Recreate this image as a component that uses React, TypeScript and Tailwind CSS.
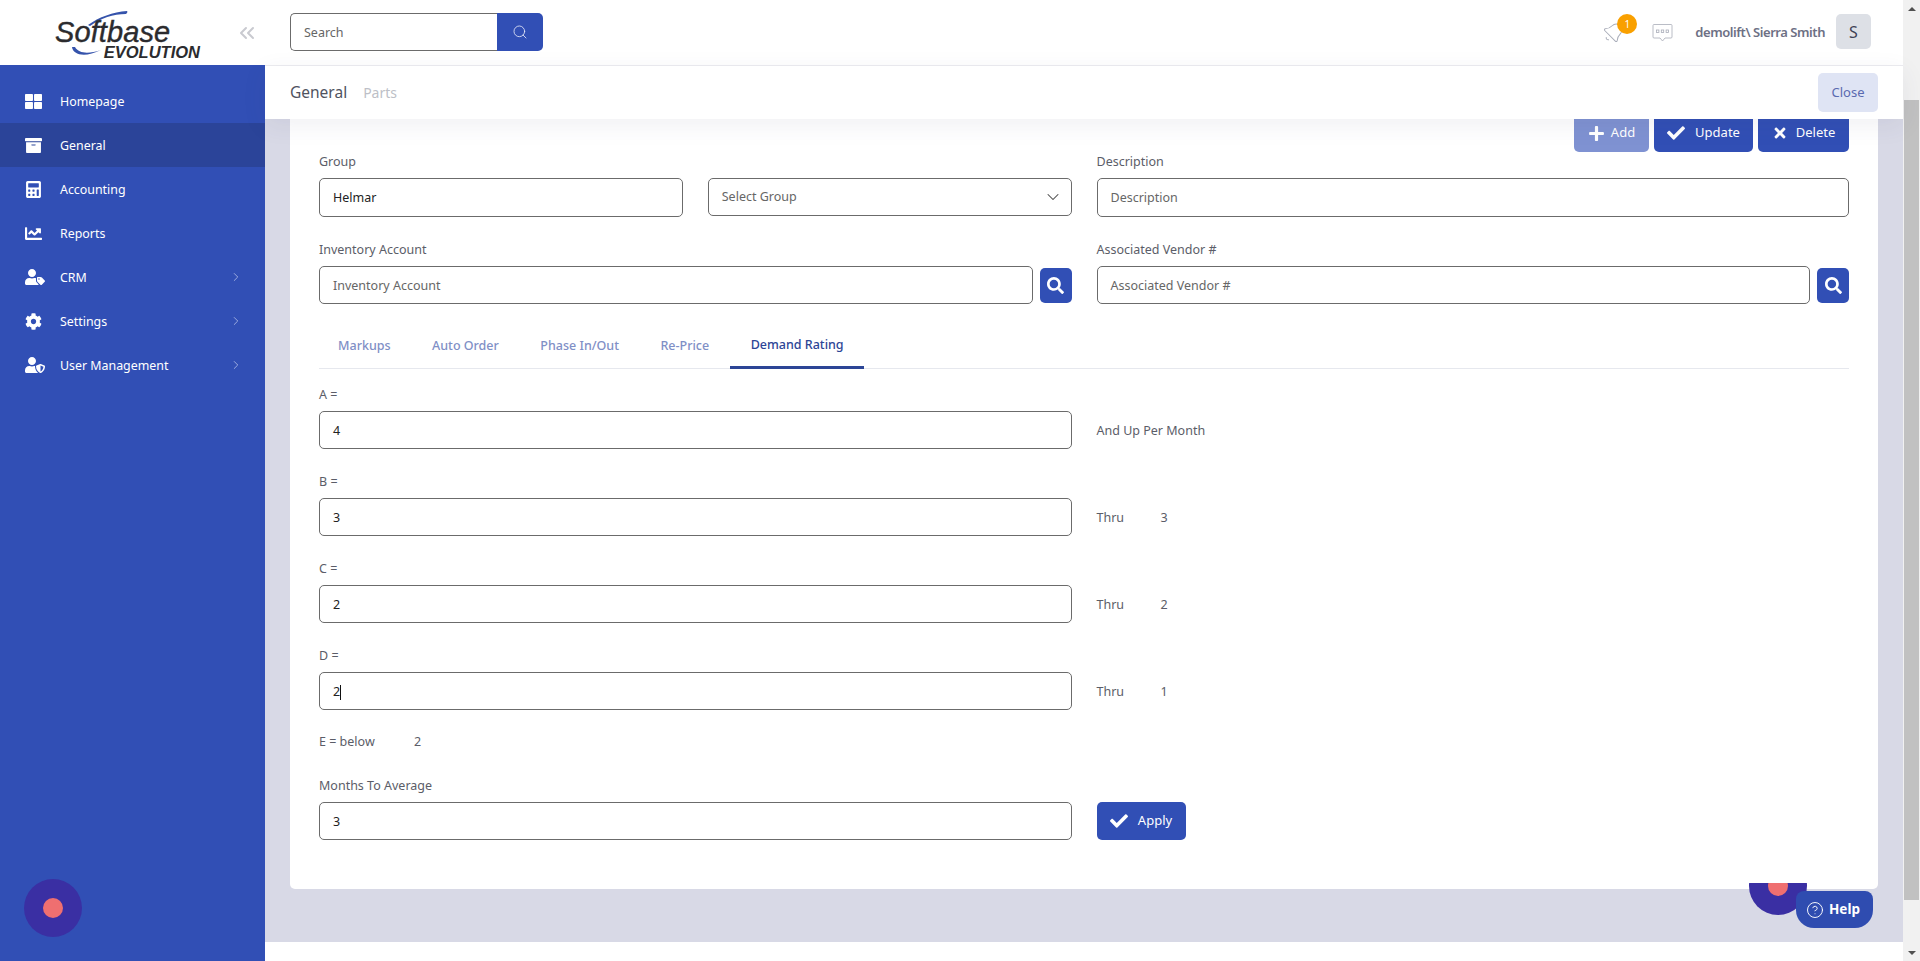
import React from "react";
import { ChevronRight, ChevronsLeft, ChevronDown, Search, Bell, CircleHelp } from "lucide-react";
import {
  FaThLarge,
  FaArchive,
  FaCalculator,
  FaChartLine,
  FaUserTag,
  FaCog,
  FaUserShield,
  FaPlus,
  FaCheck,
  FaTimes,
  FaSearch,
} from "react-icons/fa";

const menu = [
  { label: "Homepage", icon: FaThLarge, size: 17 },
  { label: "General", icon: FaArchive, size: 17 },
  { label: "Accounting", icon: FaCalculator, size: 17 },
  { label: "Reports", icon: FaChartLine, size: 17 },
  { label: "CRM", icon: FaUserTag, size: 20, arrow: true },
  { label: "Settings", icon: FaCog, size: 17, arrow: true },
  { label: "User Management", icon: FaUserShield, size: 20, arrow: true },
];

const tabs = ["Markups", "Auto Order", "Phase In/Out", "Re-Price", "Demand Rating"];

const Logo = () => (
  <div className="relative w-[146px] h-[50px] ml-[55px] shrink-0">
    {/* swoosh lines round the wordmark */}
    <svg className="absolute left-0 top-0 w-[146px] h-[50px]" viewBox="0 0 146 50" fill="none">
      <path d="M33 17 C 44 9, 58 4, 72 3 C 73 4, 72 5, 71 6 C 58 6, 46 10, 35 18 Z" fill="#3553ab" />
      <path d="M17 39 C 18 47, 30 50, 46 42 C 34 46, 24 46, 20 39 Z" fill="#3553ab" />
    </svg>
    <span className="absolute left-0 top-[10px] text-[29px] leading-[29px] tracking-[0.1px] italic text-[#2b2b2e] [-webkit-text-stroke:0.4px_#2b2b2e] font-['Liberation_Sans',sans-serif]">
      Softbase
    </span>
    <span className="absolute right-[1px] top-[36px] text-[16.5px] leading-[16.5px] font-bold italic text-[#2b2b2e] font-['Liberation_Sans',sans-serif]">
      EVOLUTION
    </span>
  </div>
);

const Sidebar = () => (
  <aside className="w-[265px] shrink-0 flex flex-col bg-[#314fb5]">
    <div className="h-[65px] bg-white flex items-center relative">
      <Logo />
      <ChevronsLeft className="ml-auto mr-[6px] text-[#c9cad0]" size={24} strokeWidth={2} />
    </div>
    <nav className="pt-[14px] flex-1">
      {menu.map((m) => (
        <div
          key={m.label}
          className={`h-[44px] flex items-center pl-[25px] pr-[22px] text-white text-[12.4px] ${m.label === "General" ? "bg-[#2b4499]" : ""}`}
        >
          <span className="w-[35px] flex items-center">
            <m.icon size={m.size} />
          </span>
          <span className="pt-[2px]">{m.label}</span>
          {m.arrow && <ChevronRight className="ml-auto text-[#a9b6e4]" size={14} strokeWidth={1.5} />}
        </div>
      ))}
    </nav>
    <div className="pl-[24px] pb-[24px]">
      <div className="w-[58px] h-[58px] rounded-full bg-[#3a2fa3] flex items-center justify-center">
        <div className="w-[20px] h-[20px] rounded-full bg-[#ef6f70]" />
      </div>
    </div>
  </aside>
);

const Topbar = () => (
  <header className="h-[66px] shrink-0 bg-white border-b border-[#ececf0] flex items-center pl-[25px] pr-[32px]">
    <div className="flex h-[38px] w-[253px] mb-[2px]">
      <div className="flex-1 border border-[#6b6b6b] border-r-0 rounded-l-[5px] flex items-center pl-[13px] pt-[3px] text-[12.5px] text-[#666]">
        Search
      </div>
      <div className="w-[46px] bg-[#314fb5] rounded-r-[5px] flex items-center justify-center pr-[1px]">
        <Search className="text-[#e4e8f8]" size={16} strokeWidth={1.25} />
      </div>
    </div>
    <div className="ml-auto flex items-center mb-[2px]">
      <div className="relative mr-[27px] pt-[2px]">
        <Bell className="text-[#a8acb8] rotate-45" size={23} strokeWidth={1} />
        <span className="absolute -right-[12px] -top-[5px] w-[20px] h-[20px] rounded-full bg-[#f9a000] text-white text-[10px] flex items-center justify-center">
          1
        </span>
      </div>
      <svg className="w-[21px] h-[20px] text-[#a8acb8] mr-[22px] mt-[2px]" viewBox="0 0 21 20" fill="none" stroke="currentColor" strokeWidth="0.8">
        <path d="M2 1.5 H19 Q20 1.5 20 2.5 V14 Q20 15 19 15 H13 L10.5 18 L8 15 H2 Q1 15 1 14 V2.5 Q1 1.5 2 1.5 Z" />
        <rect x="4.5" y="7" width="2.4" height="2.4" />
        <rect x="9.3" y="7" width="2.4" height="2.4" />
        <rect x="14.1" y="7" width="2.4" height="2.4" />
      </svg>
      <span className="text-[13px] font-semibold text-[#6d7084] tracking-[-0.45px] mr-[11px] pt-[2px]">demolift\ Sierra Smith</span>
      <div className="w-[35px] h-[35px] rounded-[5px] bg-[#dde0e6] flex items-center justify-center text-[16px] text-[#3f4254]">
        S
      </div>
    </div>
  </header>
);

const Subheader = () => (
  <div className="h-[53px] shrink-0 bg-white flex items-center pl-[25px] pr-[25px] relative z-10 shadow-[0_6px_24px_rgba(60,60,100,0.08)]">
    <span className="text-[15.5px] text-[#50535f]">General</span>
    <span className="ml-[16px] text-[14px] text-[#bdbfc7]">Parts</span>
    <div className="ml-auto w-[60px] h-[39px] rounded-[5px] bg-[#dfe4f4] flex items-center justify-center text-[13px] text-[#5a6ab0]">
      Close
    </div>
  </div>
);

const Field = ({ value, placeholder, className = "h-[38px]", caret }: { value?: string; placeholder?: string; className?: string; caret?: boolean }) => (
  <div className={`border border-[#6b6b6b] rounded-[5px] flex items-center pl-[13px] pt-[2px] text-[12.5px] bg-white ${value ? "text-[#222]" : "text-[#666]"} ${className}`}>
    {value ?? placeholder}
    {caret && <span className="w-px h-[15px] bg-[#111]" />}
  </div>
);

const Label = ({ children }: { children: React.ReactNode }) => (
  <div className="h-[18px] leading-[20px] mb-[8px] text-[12.5px] text-[#5b5d68]">{children}</div>
);

const IconBtn = () => (
  <div className="w-[32px] h-[35px] rounded-[5px] bg-[#314fb5] flex items-center justify-center text-white shrink-0">
    <FaSearch size={17} />
  </div>
);

const Thru = ({ n }: { n: string }) => (
  <div className="flex items-center pt-[2px] text-[12.5px] text-[#5b5d68]">
    <span className="w-[64px]">Thru</span>
    <span>{n}</span>
  </div>
);

const RatingRow = ({ label, value, caret, children }: { label: string; value: string; caret?: boolean; children: React.ReactNode }) => (
  <div className="mb-[23px]">
    <Label>{label}</Label>
    <div className="grid grid-cols-2 gap-x-[25px] items-center">
      <Field value={value} caret={caret} />
      {children}
    </div>
  </div>
);

const Card = () => (
  <section className="bg-white rounded-b-[5px] px-[29px] pb-[49px]">
    <div className="flex justify-end gap-[5px] h-[33px] text-[13px] text-white">
      <div className="w-[75px] pb-[5px] bg-[#7f92d2] rounded-b-[5px] flex items-center justify-center gap-[6px]">
        <FaPlus size={17} />
        Add
      </div>
      <div className="w-[99px] pb-[5px] bg-[#314fb5] rounded-b-[5px] flex items-center justify-center gap-[10px]">
        <FaCheck size={18} />
        Update
      </div>
      <div className="w-[91px] pb-[5px] bg-[#314fb5] rounded-b-[5px] flex items-center justify-center gap-[8px]">
        <FaTimes size={16} />
        Delete
      </div>
    </div>

    <div className="grid grid-cols-2 gap-x-[25px]">
      <div className="grid grid-cols-2 gap-x-[25px]">
        <div>
          <Label>Group</Label>
          <Field value="Helmar" className="h-[39px]" />
        </div>
        <div className="pt-[26px]">
          <div className="h-[38px] border border-[#6b6b6b] rounded-[5px] flex items-center justify-between pl-[13px] pr-[8px] text-[12.5px] text-[#666]">
            Select Group
            <ChevronDown className="text-[#444]" size={20} strokeWidth={1.25} />
          </div>
        </div>
      </div>
      <div>
        <Label>Description</Label>
        <Field placeholder="Description" className="h-[39px]" />
      </div>
    </div>

    <div className="grid grid-cols-2 gap-x-[25px] mt-[23px]">
      <div>
        <Label>Inventory Account</Label>
        <div className="flex items-center gap-[7px]">
          <Field placeholder="Inventory Account" className="h-[38px] flex-1" />
          <IconBtn />
        </div>
      </div>
      <div>
        <Label>Associated Vendor #</Label>
        <div className="flex items-center gap-[7px]">
          <Field placeholder="Associated Vendor #" className="h-[38px] flex-1" />
          <IconBtn />
        </div>
      </div>
    </div>

    <div className="flex mt-[18px] mb-[16px] border-b border-[#e6e8ee] h-[47px]">
      {tabs.map((t, i) => {
        const active = t === "Demand Rating";
        return (
          <div
            key={t}
            className={`px-[20.75px] pt-[2px] flex items-center text-[12.5px] font-medium h-[47px] ${i === 0 ? "-ml-[1.75px]" : ""} ${active ? "text-[#2c4596] border-b-[3px] border-b-[#2c4596]" : "text-[#7f8fc6]"}`}
          >
            {t}
          </div>
        );
      })}
    </div>

    <RatingRow label="A =" value="4">
      <div className="pt-[2px] text-[12.5px] text-[#5b5d68]">And Up Per Month</div>
    </RatingRow>
    <RatingRow label="B =" value="3">
      <Thru n="3" />
    </RatingRow>
    <RatingRow label="C =" value="2">
      <Thru n="2" />
    </RatingRow>
    <RatingRow label="D =" value="2" caret>
      <Thru n="1" />
    </RatingRow>

    <div className="flex items-center h-[18px] mb-[25px] text-[12.5px] text-[#5b5d68]">
      <span className="w-[95px]">E = below</span>
      <span>2</span>
    </div>

    <Label>Months To Average</Label>
    <div className="grid grid-cols-2 gap-x-[25px]">
      <Field value="3" />
      <div className="w-[89px] h-[38px] bg-[#314fb5] rounded-[5px] flex items-center justify-center gap-[10px] text-white text-[13px]">
        <FaCheck size={18} />
        Apply
      </div>
    </div>
  </section>
);

const Scrollbar = () => (
  <div className="w-[17px] shrink-0 bg-[#f1f1f1] flex flex-col items-center">
    <div className="h-[17px] w-full flex items-center justify-center">
      <div className="w-0 h-0 border-x-[4px] border-x-transparent border-b-[4px] border-b-[#505050]" />
    </div>
    <div className="mt-[83px] h-[800px] w-[15px] bg-[#c1c1c1]" />
    <div className="mt-auto h-[17px] w-full flex items-center justify-center">
      <div className="w-0 h-0 border-x-[4px] border-x-transparent border-t-[4px] border-t-[#505050]" />
    </div>
  </div>
);

export default function App() {
  return (
    <div className="relative h-screen w-screen flex overflow-hidden font-['Noto_Sans',sans-serif]">
      <Sidebar />
      <div className="flex-1 min-w-0 flex flex-col">
        <Topbar />
        <Subheader />
        <main className="flex-1 min-h-0 bg-[#d8d9e6] px-[25px]">
          <Card />
        </main>
        <div className="h-[19px] shrink-0 bg-white" />
      </div>
      <Scrollbar />

      {/* chat widgets floating over the page */}
      <div className="absolute left-[1749px] top-[883px] w-[58px] h-[32px] overflow-hidden">
        <div className="w-[58px] h-[58px] -mt-[26px] rounded-full bg-[#3a2fa3] flex items-center justify-center">
          <div className="w-[20px] h-[20px] rounded-full bg-[#ef6f70]" />
        </div>
      </div>
      <div className="absolute left-[1796px] top-[891px] w-[77px] h-[37px] rounded-t-[8px] rounded-b-[18px] bg-[#2f4cb0] flex items-center justify-center gap-[5px] text-white text-[13.5px] font-bold pr-[3px]">
        <CircleHelp size={18} strokeWidth={1.25} />
        Help
      </div>
    </div>
  );
}
